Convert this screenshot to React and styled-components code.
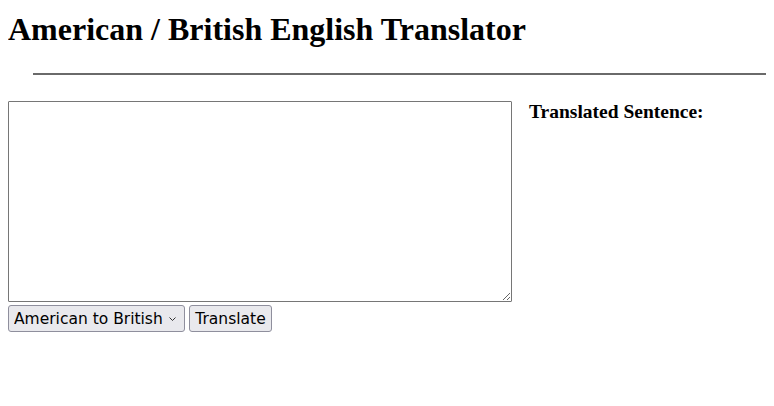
import React, { useState } from 'react'
import styled, { createGlobalStyle } from 'styled-components'

const Global = createGlobalStyle`
    body {
        margin: 8px;
        font-family: "Liberation Serif", "Times New Roman", serif;
        background: #fff;
        color: #000;
    }
`

const Title = styled.h1`
    font-size: 32px;
    margin: 3px 0 0 0;
    line-height: 37px;
`

const Rule = styled.div`
    margin: 25px -8px 26px 25px;
    height: 2px;
    background: #6a6a6a;
`

const Row = styled.div`
    display: flex;
    align-items: flex-start;
    gap: 17px;
`

const InputColumn = styled.div`
    display: flex;
    flex-direction: column;
    gap: 3px;
`

const TextBox = styled.textarea`
    width: 504px;
    height: 201px;
    box-sizing: border-box;
    border: 1px solid #767676;
    border-radius: 1px;
    margin: 0;
    padding: 2px;
    font-family: "Liberation Mono", monospace;
    font-size: 13px;
`

const Controls = styled.div`
    display: flex;
    gap: 4px;
`

const SelectWrap = styled.div`
    position: relative;
    display: flex;
`

const Select = styled.select`
    appearance: none;
    width: 177px;
    height: 27px;
    font-family: "DejaVu Sans", Tahoma, sans-serif;
    font-size: 15.5px;
    color: #000;
    background: #e9e9ed;
    border: 1px solid #8f8f9d;
    border-radius: 3px;
    padding: 0 0 0 5px;
    margin: 0;
`

const Chevron = styled.svg`
    position: absolute;
    right: 9px;
    top: 12px;
    pointer-events: none;
`

const Button = styled.button`
    width: 83px;
    height: 27px;
    font-family: "DejaVu Sans", Tahoma, sans-serif;
    font-size: 15.5px;
    color: #000;
    background: #e9e9ed;
    border: 1px solid #8f8f9d;
    border-radius: 3px;
    padding: 0;
    margin: 0;
`

const Heading = styled.h3`
    font-size: 19.5px;
    margin: 0;
    line-height: 22px;
`

export default function App() {
    const [text, setText] = useState('')
    const [locale, setLocale] = useState('american-to-british')

    return (
        <>
            <Global />
            <Title>American / British English Translator</Title>
            <Rule />
            <Row>
                <InputColumn>
                    <TextBox
                        value={text}
                        onChange={(event) => setText(event.target.value)}
                    />
                    <Controls>
                        <SelectWrap>
                            <Select
                                value={locale}
                                onChange={(event) =>
                                    setLocale(event.target.value)
                                }
                            >
                                <option value="american-to-british">
                                    American to British
                                </option>
                                <option value="british-to-american">
                                    British to American
                                </option>
                            </Select>
                            <Chevron width="7" height="4" viewBox="0 0 7 4">
                                <path
                                    d="M0.5 0.5 L3.5 3.5 L6.5 0.5"
                                    fill="none"
                                    stroke="#333"
                                    strokeWidth="1"
                                />
                            </Chevron>
                        </SelectWrap>
                        <Button>Translate</Button>
                    </Controls>
                </InputColumn>
                <Heading>Translated Sentence:</Heading>
            </Row>
        </>
    )
}
